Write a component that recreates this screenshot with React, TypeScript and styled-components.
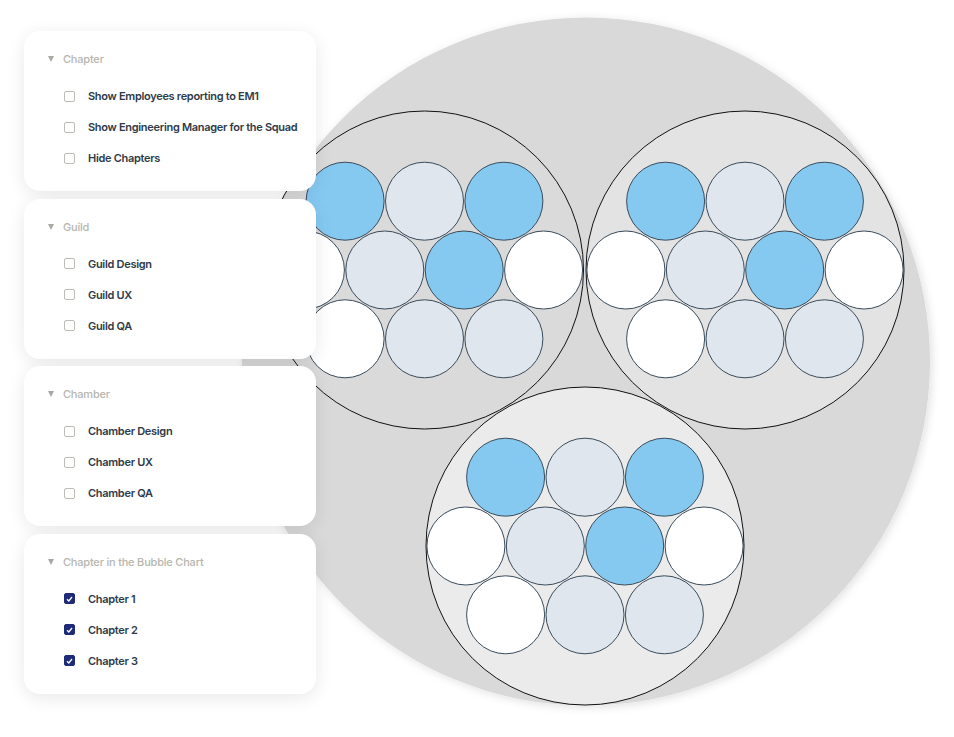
import styled, { createGlobalStyle } from 'styled-components'

//-----------------------------------------------------------------------------
// Data
//-----------------------------------------------------------------------------
type Option = { label: string; checked?: boolean }
type Section = { title: string; options: Option[] }

const sections: Section[] = [
  {
    title: 'Chapter',
    options: [
      { label: 'Show Employees reporting to EM1' },
      { label: 'Show Engineering Manager for the Squad' },
      { label: 'Hide Chapters' }
    ]
  },
  {
    title: 'Guild',
    options: [{ label: 'Guild Design' }, { label: 'Guild UX' }, { label: 'Guild QA' }]
  },
  {
    title: 'Chamber',
    options: [
      { label: 'Chamber Design' },
      { label: 'Chamber UX' },
      { label: 'Chamber QA' }
    ]
  },
  {
    title: 'Chapter in the Bubble Chart',
    options: [
      { label: 'Chapter 1', checked: true },
      { label: 'Chapter 2', checked: true },
      { label: 'Chapter 3', checked: true }
    ]
  }
]

const BLUE = '#85c9f1'
const LIGHT = '#dfe6ed'
const WHITE = '#ffffff'

// Hex-packed member bubbles, relative to the squad center
const STEP = 79.4
const ROW = 68.8
const members: { dx: number; dy: number; fill: string }[] = [
  { dx: -STEP, dy: -ROW, fill: BLUE },
  { dx: 0, dy: -ROW, fill: LIGHT },
  { dx: STEP, dy: -ROW, fill: BLUE },
  { dx: -STEP * 1.5, dy: 0, fill: WHITE },
  { dx: -STEP * 0.5, dy: 0, fill: LIGHT },
  { dx: STEP * 0.5, dy: 0, fill: BLUE },
  { dx: STEP * 1.5, dy: 0, fill: WHITE },
  { dx: -STEP, dy: ROW, fill: WHITE },
  { dx: 0, dy: ROW, fill: LIGHT },
  { dx: STEP, dy: ROW, fill: LIGHT }
]

const squads = [
  { cx: 424.5, cy: 270, fill: '#dadada' },
  { cx: 745, cy: 270, fill: '#e3e3e3' },
  { cx: 585, cy: 546, fill: '#ebebeb' }
]

//-----------------------------------------------------------------------------
// Components
//-----------------------------------------------------------------------------
const BubbleChart = (): JSX.Element => (
  <Chart viewBox="0 0 954 737" width={954} height={737}>
    <defs>
      <filter id="tribeShadow" x="-10%" y="-10%" width="120%" height="120%">
        <feDropShadow dx="2" dy="2" stdDeviation="4" floodColor="#000" floodOpacity="0.12" />
      </filter>
    </defs>
    <circle cx={586} cy={361.5} r={344} fill="#d9d9d9" filter="url(#tribeShadow)" />
    {squads.map((s, i) => (
      <g key={i}>
        <circle cx={s.cx} cy={s.cy} r={159} fill={s.fill} stroke="#111" strokeWidth={1} />
        {members.map((m, j) => (
          <circle
            key={j}
            cx={s.cx + m.dx}
            cy={s.cy + m.dy}
            r={39}
            fill={m.fill}
            stroke="#3a4b5a"
            strokeWidth={1}
          />
        ))}
      </g>
    ))}
  </Chart>
)

const Checkbox = ({ checked }: { checked?: boolean }): JSX.Element => (
  <Box $checked={checked}>
    {checked && (
      <svg width="7" height="6" viewBox="0 0 7 6">
        <path d="M1 3.2 L2.8 5 L6 1" fill="none" stroke="#fff" strokeWidth="1.3" />
      </svg>
    )}
  </Box>
)

const App = (): JSX.Element => (
  <>
    <GlobalStyle />
    <Stage>
      <BubbleChart />
      <Sidebar>
        {sections.map((section) => (
          <Panel key={section.title}>
            <Header>
              <Caret />
              {section.title}
            </Header>
            <Options>
              {section.options.map((option) => (
                <OptionRow key={option.label}>
                  <Checkbox checked={option.checked} />
                  {option.label}
                </OptionRow>
              ))}
            </Options>
          </Panel>
        ))}
      </Sidebar>
    </Stage>
  </>
)

//-----------------------------------------------------------------------------
// Styled Components
//-----------------------------------------------------------------------------
const GlobalStyle = createGlobalStyle`
  body {
    margin: 0;
    background: #ffffff;
    font-family: Inter, "Noto Sans", sans-serif;
  }
`
const Stage = styled.div`
  display: grid;
  width: 954px;
  height: 737px;
  overflow: hidden;
  & > * {
    grid-area: 1 / 1;
  }
`
const Chart = styled.svg`
  display: block;
`
const Sidebar = styled.div`
  display: flex;
  flex-direction: column;
  gap: 7.5px;
  align-self: start;
  justify-self: start;
  width: 292px;
  padding: 31px 0 0 24px;
`
const Panel = styled.section`
  height: 160px;
  box-sizing: border-box;
  padding: 21px 24px 0;
  background: #ffffff;
  border-radius: 16px;
  box-shadow: 0 4px 18px rgba(0, 0, 0, 0.09);
`
const Header = styled.div`
  display: flex;
  align-items: center;
  gap: 9px;
  height: 14px;
  font-size: 11px;
  font-weight: 500;
  letter-spacing: -0.2px;
  white-space: nowrap;
  color: #b6b6ae;
`
const Caret = styled.span`
  flex-shrink: 0;
  width: 0;
  height: 0;
  border-left: 3.5px solid transparent;
  border-right: 3.5px solid transparent;
  border-top: 6px solid #a9a9a4;
`
const Options = styled.div`
  display: flex;
  flex-direction: column;
  gap: 17px;
  margin-top: 23px;
  padding-left: 16px;
`
const OptionRow = styled.label`
  display: flex;
  align-items: center;
  gap: 13px;
  height: 14px;
  font-size: 11px;
  font-weight: 600;
  letter-spacing: -0.3px;
  white-space: nowrap;
  color: #2e3a48;
`
const Box = styled.span<{ $checked?: boolean }>`
  flex-shrink: 0;
  display: flex;
  align-items: center;
  justify-content: center;
  width: 11px;
  height: 11px;
  box-sizing: border-box;
  border-radius: 2px;
  border: 1px solid ${(p) => (p.$checked ? '#1e2b78' : '#bdbdb8')};
  background: ${(p) => (p.$checked ? '#1e2b78' : '#ffffff')};
`

export default App
